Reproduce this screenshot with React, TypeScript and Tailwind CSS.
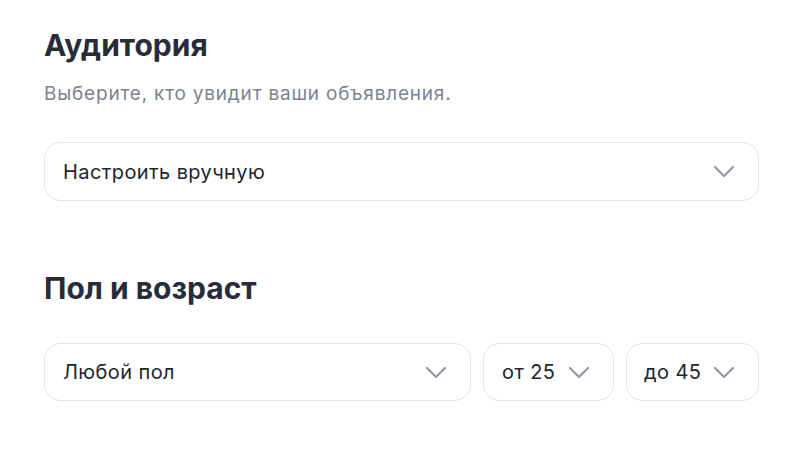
import React from "react";

function Chevron() {
  return (
    <svg width="22" height="13" viewBox="0 0 22 13" fill="none" className="shrink-0">
      <path d="M2 2L11 11L20 2" stroke="#9499a8" strokeWidth="2.2" strokeLinecap="round" strokeLinejoin="round" />
    </svg>
  );
}

function Select({ label, className }: { label: string; className: string }) {
  return (
    <div
      className={
        "flex items-center justify-between rounded-[16px] border border-[#e4e5ee] bg-white pr-[23px] " +
        className
      }
    >
      <span className="whitespace-nowrap text-[20px] leading-[24px] text-[#22252d] tracking-[0.4px]">{label}</span>
      <Chevron />
    </div>
  );
}

export default function App() {
  return (
    <div
      className="w-[800px] h-[466px] bg-white pl-[44px] pr-[41px] pt-[27px]"
      style={{ fontFamily: "Inter, 'Noto Sans', sans-serif" }}
    >
      <h1 className="text-[30px] leading-[36px] font-bold text-[#282c38] tracking-[0px]">Аудитория</h1>
      <p className="mt-[19px] whitespace-nowrap text-[19px] leading-[24px] text-[#7b8295] tracking-[0.8px]">
        Выберите, кто увидит ваши объявления.
      </p>
      <Select label="Настроить вручную" className="mt-[36px] w-full h-[59px] pl-[18px]" />
      <h2 className="mt-[69px] text-[30px] leading-[36px] font-bold text-[#282c38] tracking-[0px]">Пол и возраст</h2>
      <div className="mt-[37px] flex gap-[12px]">
        <Select label="Любой пол" className="w-[427px] h-[58px] pl-[18px]" />
        <Select label="от 25" className="w-[131px] h-[58px] pl-[18px]" />
        <Select label="до 45" className="w-[133px] h-[58px] pl-[17px]" />
      </div>
    </div>
  );
}
